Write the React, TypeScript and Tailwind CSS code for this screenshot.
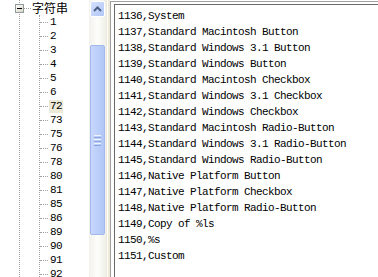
import React from 'react';

const mono = { fontFamily: '"Liberation Mono", "Noto Sans CJK SC", monospace' };

const children = ['1', '2', '3', '4', '5', '6', '72', '73', '75', '76', '78', '80', '81', '85', '86', '89', '90', '91', '92'];

const lines = [
  '1136,System',
  '1137,Standard Macintosh Button',
  '1138,Standard Windows 3.1 Button',
  '1139,Standard Windows Button',
  '1140,Standard Macintosh Checkbox',
  '1141,Standard Windows 3.1 Checkbox',
  '1142,Standard Windows Checkbox',
  '1143,Standard Macintosh Radio-Button',
  '1144,Standard Windows 3.1 Radio-Button',
  '1145,Standard Windows Radio-Button',
  '1146,Native Platform Button',
  '1147,Native Platform Checkbox',
  '1148,Native Platform Radio-Button',
  '1149,Copy of %ls',
  '1150,%s',
  '1151,Custom',
];

const Tree = () => (
  <div className="relative w-[89px] shrink-0 bg-white pt-[1px]">
    {/* sibling line of the root level */}
    <div className="absolute left-[19px] top-0 bottom-0 border-l border-dotted border-[#a0a0a0]" />
    <div className="relative flex h-[14px] items-center pl-[15px]">
      <div className="flex h-[9px] w-[9px] items-center justify-center border border-[#919b9c] bg-gradient-to-br from-white to-[#d8d5c8]">
        <div className="h-[1px] w-[5px] bg-black" />
      </div>
      <div className="w-[7px] border-t border-dotted border-[#a0a0a0]" />
      <span className="pl-[1px] text-[12px] leading-[14px] text-black" style={{ fontFamily: '"Noto Sans CJK SC", sans-serif' }}>
        字符串
      </span>
    </div>
    <div className="ml-[39px] border-l border-dotted border-[#a0a0a0]">
      {children.map((c) => (
        <div key={c} className="flex h-[14px] items-center">
          <div className="w-[8px] border-t border-dotted border-[#a0a0a0]" />
          <span
            className={`ml-[1px] px-[1px] text-[11px] leading-[13px] tracking-[-0.6px] text-black ${c === '72' ? 'bg-[#ece9d8]' : ''}`}
            style={mono}
          >
            {c}
          </span>
        </div>
      ))}
    </div>
  </div>
);

const ScrollBar = () => (
  <div className="flex w-[17px] shrink-0 flex-col bg-gradient-to-r from-[#f3f1ec] via-[#fdfdfa] to-[#f0efe8] px-[1px] pt-[1px]">
    <div className="flex h-[16px] items-center justify-center rounded-[2px] border border-white bg-gradient-to-br from-[#d5e1fd] to-[#b2c7f7]">
      <svg width="9" height="6" viewBox="0 0 9 6">
        <path d="M1 5 L4.5 1.5 L8 5" fill="none" stroke="#4d6185" strokeWidth="2" />
      </svg>
    </div>
    <div className="h-[28px]" />
    <div className="flex h-[190px] flex-col items-center justify-center gap-[1px] rounded-[2px] border border-[#a3b8ec] bg-gradient-to-r from-[#c8d7fc] via-[#bccffa] to-[#b2c6f6]">
      <div className="h-[1px] w-[7px] bg-[#eef3fe]" />
      <div className="h-[1px] w-[7px] bg-[#8ca4e0]" />
      <div className="h-[1px] w-[7px] bg-[#eef3fe]" />
      <div className="h-[1px] w-[7px] bg-[#8ca4e0]" />
      <div className="h-[1px] w-[7px] bg-[#eef3fe]" />
      <div className="h-[1px] w-[7px] bg-[#8ca4e0]" />
    </div>
  </div>
);

export default function App() {
  return (
    <div className="flex h-[277px] w-[378px] overflow-hidden bg-white">
      <Tree />
      <ScrollBar />
      <div className="flex w-[4px] shrink-0 bg-[#ece9d8]">
        <div className="ml-[1px] w-[1px] bg-white" />
      </div>
      <div className="mt-[1px] flex-1 border-l border-t border-[#a0a0a0] bg-white pl-[3px] pt-[2px]">
        <div className="h-full border-l border-t border-[#696969] pl-[3px] pt-[3px]">
          {lines.map((l) => (
            <div key={l} className="h-[16px] whitespace-nowrap text-[11px] leading-[16px] tracking-[-0.6px] text-black" style={mono}>
              {l}
            </div>
          ))}
        </div>
      </div>
    </div>
  );
}
